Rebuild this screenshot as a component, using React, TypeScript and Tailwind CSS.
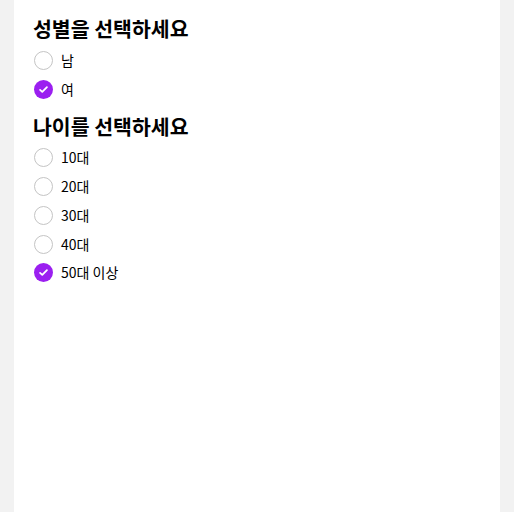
import { useState } from "react"

const genders = ["남", "여"]
const ages = ["10대", "20대", "30대", "40대", "50대 이상"]

function Radio({ label, checked, onClick }: { label: string; checked: boolean; onClick: () => void }) {
  return (
    <button onClick={onClick} className="flex items-center gap-[8px] h-[28.75px] text-left">
      {checked ? (
        <span className="flex h-[19px] w-[19px] items-center justify-center rounded-full bg-[#9b1ff0]">
          <svg viewBox="0 0 16 16" className="h-[11px] w-[11px]" fill="none" stroke="white" strokeWidth="2.6" strokeLinecap="round" strokeLinejoin="round">
            <path d="M3 8.5l3.2 3L13 4.5" />
          </svg>
        </span>
      ) : (
        <span className="h-[19px] w-[19px] rounded-full border border-[#c4c4c4] bg-white" />
      )}
      <span className="text-[14px] text-black">{label}</span>
    </button>
  )
}

export default function App() {
  const [gender, setGender] = useState("여")
  const [age, setAge] = useState("50대 이상")

  return (
    <div
      className="min-h-[512px] bg-[#f2f2f2] flex"
      style={{ fontFamily: '"Noto Sans CJK KR", "Noto Sans", sans-serif' }}
    >
      <div className="ml-[14px] w-[486px] bg-white pl-[19px] pt-[14px]">
        <h2 className="text-[20.5px] leading-[28px] font-bold text-black">성별을 선택하세요</h2>
        <div className="flex flex-col items-start mt-[4px] pl-[1px]">
          {genders.map((g) => (
            <Radio key={g} label={g} checked={gender === g} onClick={() => setGender(g)} />
          ))}
        </div>
        <h2 className="mt-[8px] text-[20.5px] leading-[28px] font-bold text-black">나이를 선택하세요</h2>
        <div className="flex flex-col items-start mt-[4px] pl-[1px]">
          {ages.map((a) => (
            <Radio key={a} label={a} checked={age === a} onClick={() => setAge(a)} />
          ))}
        </div>
      </div>
    </div>
  )
}
